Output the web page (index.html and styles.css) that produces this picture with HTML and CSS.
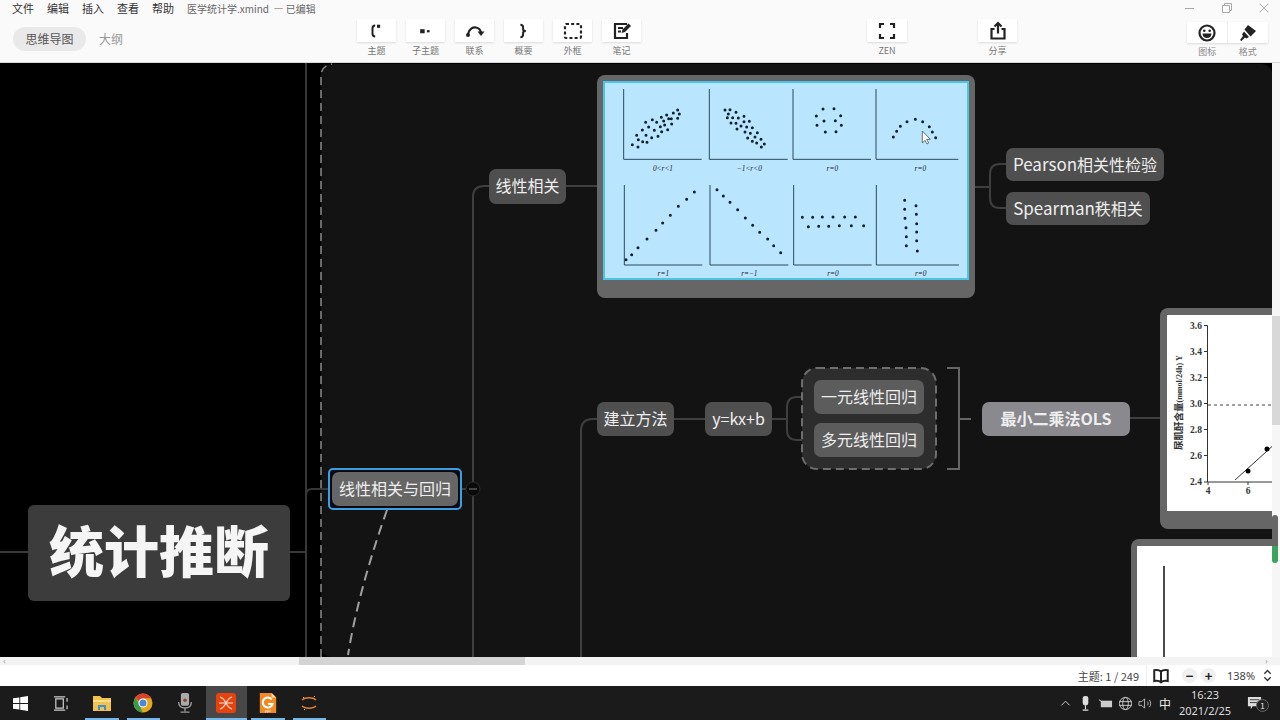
FILE: index.html
```html
<!DOCTYPE html>
<html lang="zh-CN">
<head>
<meta charset="utf-8">
<title>医学统计学.xmind</title>
<link rel="stylesheet" href="styles.css">
</head>
<body>
<div class="app">
  <header class="topbar">
    <div class="leftcol">
      <nav class="menu">
        <span>文件</span><span>编辑</span><span>插入</span><span>查看</span><span>帮助</span>
        <span class="doc">医学统计学.xmind &nbsp;— 已编辑</span>
      </nav>
      <div class="tabs"><span class="tab on">思维导图</span><span class="tab">大纲</span></div>
    </div>
    <div class="tools">
      <div class="tool"><div class="tbox"><svg class="ico" viewBox="0 0 20 20"><path d="M8 4C5.500 4 5 5.500 5 7v6c0 1.500.5 3 3 3" class="st"/><rect x="10" y="3" width="3.500" height="3.500" class="fl"/></svg></div><span>主题</span></div>
      <div class="tool"><div class="tbox"><svg class="ico" viewBox="0 0 20 20"><rect x="3.500" y="8" width="5" height="4.500" class="fl"/><rect x="11" y="9" width="3" height="2.500" class="fl"/></svg></div><span>子主题</span></div>
      <div class="tool"><div class="tbox"><svg class="ico lg" viewBox="0 0 20 20"><path d="M3 13C4 8 8 6 11 6.500s4.500 3 5 5" class="st"/><circle cx="3" cy="14" r="2" class="fl"/><path d="M12.500 10.500h7l-3.500 4.500z" class="fl"/></svg></div><span>联系</span></div>
      <div class="tool"><div class="tbox"><svg class="ico" viewBox="0 0 20 20"><path d="M6 3c3 0 3 1.500 3 3v2c0 1 .5 2 3 2-2.500 0-3 1-3 2v2c0 1.500 0 3-3 3" class="st"/></svg></div><span>概要</span></div>
      <div class="tool"><div class="tbox"><svg class="ico lg" viewBox="0 0 20 20"><rect x="2" y="3" width="16" height="14" rx="1" class="st dash"/></svg></div><span>外框</span></div>
      <div class="tool"><div class="tbox"><svg class="ico lg" viewBox="0 0 20 20"><path d="M15 3H3v14h12v-5M6 7h5M6 10.500h3" class="st"/><path d="M9.500 12l1-3.500L16.500 2.500l2.500 2.500-6 6z" class="fl"/></svg></div><span>笔记</span></div>
    </div>
    <div class="tool zen"><div class="tbox wide"><svg class="ico lg" viewBox="0 0 20 20"><path d="M7 3H3v4M13 3h4v4M7 17H3v-4M13 17h4v-4" class="st"/></svg></div><span>ZEN</span></div>
    <div class="tool share"><div class="tbox"><svg class="ico lg" viewBox="0 0 20 20"><path d="M6.500 8H3.500v9.500h13V8h-3M10 12.500V2.500M6.500 5.500L10 2l3.500 3.500" class="st"/></svg></div><span>分享</span></div>
    <div class="rightcol">
      <div class="winctl">
        <svg class="wc" viewBox="0 0 12 12"><path d="M1 6.500h9"/></svg>
        <svg class="wc" viewBox="0 0 12 12"><path d="M1.500 3.500h7v7h-7zM3.500 3.500v-2h7v7h-2"/></svg>
        <svg class="wc" viewBox="0 0 12 12"><path d="M1.500 1.500l9 9M10.500 1.500l-9 9"/></svg>
      </div>
      <div class="pair">
        <div class="pbox"><svg class="ico lg" viewBox="0 0 20 20"><circle cx="10" cy="10" r="7.500" class="st"/><circle cx="7.300" cy="7.800" r="1.300" class="fl"/><circle cx="12.700" cy="7.800" r="1.300" class="fl"/><path d="M5.500 10.500h9c0 3-2 4.500-4.500 4.500s-4.500-1.500-4.500-4.500z" class="fl"/></svg></div>
        <div class="pbox"><svg class="ico lg" viewBox="0 0 20 20"><path d="M10 2l8 6-5.500 5.500-6-7zM6 8.500l5 5.500-2.500 1.500-1.500-1-3.500 3.500-1.500-1 3-4-1-1.500z" class="fl"/></svg></div>
      </div>
      <div class="plabels"><span>图标</span><span>格式</span></div>
    </div>
  </header>

  <div class="workspace">
    <main class="stage">
      <svg class="wires" viewBox="0 63 1272 594">
        <rect x="321" y="64" width="951" height="593" rx="10" class="region"/>
        <path d="M321 657V76q0-10 11-12" class="edge"/>
        <path d="M306 63V657M0 552H28M290 552H306M306 495q0-6 6-6H330" class="ln dim"/>
        <path d="M473 657V197q0-11 11-11H489M462 489H473" class="ln"/>
        <path d="M581 657V431q0-12 12-12H597M674 419H705" class="ln"/>
        <path d="M566 186H597" class="ln"/>
        <path d="M975 187H990M1006 164H1000q-10 0-10 10V198q0 10 10 10H1006" class="ln"/>
        <path d="M772 419H787M814 397H797q-10 0-10 10V430q0 10 10 10H814" class="ln"/>
        <path d="M947 368H959V469H947M959 419H971" class="ln brk"/>
        <path d="M1130 418H1160" class="ln"/>
        <path d="M387 510C372 552 356 605 348 655" class="curve"/>
        <rect x="802" y="368" width="134" height="101" rx="15" class="boundary"/>
        <circle cx="473" cy="489" r="7" class="fold"/>
        <path d="M469 489h8" class="foldbar"/>
      </svg>

      <div class="node big">统计推断</div>
      <div class="selring"><div class="node inner">线性相关与回归</div></div>
      <div class="node n-corr">线性相关</div>
      <div class="node n-pearson"><span><span class="lat">Pearson</span>相关性检验</span></div>
      <div class="node n-spearman"><span><span class="lat">Spearman</span>秩相关</span></div>
      <div class="node n-build">建立方法</div>
      <div class="node n-eq">y=kx+b</div>
      <div class="node n-uni">一元线性回归</div>
      <div class="node n-multi">多元线性回归</div>
      <div class="node n-ols">最小二乘法OLS</div>

      <div class="card card1">
        <svg class="plot" viewBox="24 33 1098 597">
          <path class="axis" d="M86 57V268H320M343 57V268H578M594 57V268H828M843 57V268H1090M88 345V585H322M345 345V585H580M596 345V585H830M844 345V585H1092"/>
          <path class="dots" d="M112 224h0M129 231h0M130 209h0M125 196h0M143 215h0M156 217h0M153 196h0M170 203h0M189 199h0M142 180h0M161 171h0M178 181h0M152 157h0M172 149h0M185 157h0M196 170h0M200 185h0M218 179h0M230 162h0M209 165h0M199 142h0M206 153h0M215 135h0M221 146h0M235 129h0M248 120h0M253 132h0M248 145h0M229 146h0"/>
          <path class="dots" d="M390 120h0M405 119h0M423 127h0M400 132h0M397 143h0M413 143h0M430 144h0M447 139h0M408 159h0M423 160h0M438 168h0M463 154h0M447 155h0M426 177h0M450 186h0M455 171h0M472 173h0M466 190h0M487 188h0M458 204h0M480 201h0M498 208h0M472 214h0M485 219h0M508 222h0M499 231h0"/>
          <path class="dots" d="M684 117h0M717 116h0M664 138h0M737 137h0M687 153h0M721 152h0M666 166h0M739 166h0M691 186h0M723 185h0"/>
          <path class="dots" d="M895 201h0M905 184h0M916 169h0M936 155h0M961 148h0M983 155h0M1003 170h0M1012 186h0M1022 203h0"/>
          <path class="dots" d="M93 569h0M110 554h0M129 533h0M156 507h0M183 481h0M203 459h0M226 436h0M250 409h0M275 388h0M298 366h0"/>
          <path class="dots" d="M366 359h0M385 378h0M405 397h0M428 419h0M451 444h0M473 466h0M494 487h0M518 507h0M536 527h0M557 548h0"/>
          <path class="dots" d="M622 442h0M653 442h0M682 441h0M714 441h0M749 441h0M781 441h0M640 470h0M671 469h0M701 469h0M733 467h0M769 467h0M806 467h0"/>
          <path class="dots" d="M929 391h0M929 418h0M930 445h0M933 473h0M934 500h0M934 527h0M963 407h0M964 433h0M965 461h0M965 486h0M965 512h0M967 543h0"/>
          <g class="cap">
            <text x="204" y="302">0&lt;r&lt;1</text><text x="463" y="302">−1&lt;r&lt;0</text><text x="712" y="302">r=0</text><text x="976" y="302">r=0</text>
            <text x="205" y="619">r=1</text><text x="463" y="619">r=−1</text><text x="714" y="619">r=0</text><text x="977" y="619">r=0</text>
          </g>
          <path class="cursor" d="M982 183v36l8-8 6 11 5-3-6-11h11z"/>
        </svg>
      </div>

      <div class="card card2">
        <svg class="plot" viewBox="1167 315 105 196">
          <path class="chart" d="M1204 325.500h3.500V482H1272M1204 351.500h3M1204 377.500h3M1204 403.500h3M1204 429.500h3M1204 455.500h3M1204 482h3M1208 482v3M1248 482v3"/>
          <path class="chartdash" d="M1208 405H1272"/>
          <path class="chart" d="M1235 480L1272 446.500"/>
          <circle cx="1248" cy="471" r="2.500"/><circle cx="1267" cy="449" r="2.500"/>
          <g class="tick">
            <text x="1196" y="329">3.6</text><text x="1196" y="355">3.4</text><text x="1196" y="381">3.2</text><text x="1196" y="407">3.0</text><text x="1196" y="433">2.8</text><text x="1196" y="459">2.6</text><text x="1196" y="485">2.4</text>
            <text x="1208" y="494">4</text><text x="1248" y="494">6</text>
          </g>
          <text class="ylab" transform="translate(1182 450) rotate(-90)">尿肌酐含量<tspan class="ylab-s">(mmol/24h) Y</tspan></text>
        </svg>
      </div>

      <div class="card card3">
        <svg class="plot" viewBox="1137 546 135 111"><path class="chart thick" d="M1164 566V657"/></svg>
      </div>
    </main>
    <aside class="vscroll">
      <span class="vthumb"></span>
      <span class="vmark"></span>
    </aside>
  </div>

  <div class="hscroll"><span class="arrow">‹</span><span class="hthumb"></span><span class="arrow end">›</span></div>

  <footer class="status">
    <span class="count">主题: 1 / 249</span>
    <span class="book"><svg class="ico" viewBox="0 0 20 20"><path d="M10 5C8 3 5 3 2.500 3.500v12c2.500-.5 5.500-.5 7.500 1.500 2-2 5-2 7.500-1.500v-12C15 3 12 3 10 5zM10 5v12" class="st"/></svg></span>
    <span class="zbtn">−</span><span class="zbtn">+</span>
    <span class="zoomval">138%</span>
    <svg class="updown" viewBox="0 0 10 16"><path d="M1.500 6L5 2.500 8.500 6M1.500 10L5 13.500 8.500 10"/></svg>
  </footer>

  <div class="taskbar">
    <div class="tsk"><svg class="tic small" viewBox="0 0 16 16"><path d="M0 2.500L6.800 1.500V7.500H0zM7.700 1.400L16 0V7.500H7.700zM0 8.500H6.800V14.500L0 13.500zM7.700 8.500H16V16L7.700 14.600z" fill="#fff"/></svg></div>
    <div class="tsk"><svg class="tic small" viewBox="0 0 16 16"><path d="M3 3h8v10H3zM1 1h12M1 15h12M15 2v4M15 10v4" fill="none" stroke="#ccc" stroke-width="1.300"/></svg></div>
    <div class="apps">
      <div class="tsk tapp run"><svg class="tic" viewBox="0 0 20 20"><path d="M1 3h7l2 2h9v13H1z" fill="#f2c24d"/><path d="M1 7h18v2H1z" fill="#fbe08c"/><path d="M6 12h8v5h-2v-3H8v3H6z" fill="#3d8fcf"/></svg></div>
      <div class="tsk tapp run"><svg class="tic" viewBox="0 0 20 20"><circle cx="10" cy="10" r="9.500" fill="#e3a91c"/><path d="M10 .5a9.500 9.500 0 0 1 8.200 4.700H10A5 5 0 0 0 5.500 8L2.400 4.400A9.500 9.500 0 0 1 10 .5z" fill="#d8402f"/><path d="M2.400 4.400L6.500 12l3 7.500A9.500 9.500 0 0 1 2.400 4.400z" fill="#3a9a4a"/><circle cx="10" cy="10" r="4.500" fill="#fff"/><circle cx="10" cy="10" r="3.500" fill="#4a87e0"/></svg></div>
      <div class="tsk tapp"><svg class="tic" viewBox="0 0 20 22"><rect x="5.500" y="0" width="9" height="14" rx="2" fill="#aaa"/><circle cx="10" cy="8" r="2" fill="#8a4a30"/><path d="M3 10c0 5 3 6.500 7 6.500s7-1.500 7-6.500M10 17v3M5 21h10" fill="none" stroke="#999" stroke-width="1.500"/></svg></div>
      <div class="tsk tapp run act"><svg class="tic" viewBox="0 0 20 20"><rect width="20" height="20" rx="3" fill="#e8430f"/><path d="M4 4c3 1 4.500 3 6 6 1.500-3 3-5 6-6M4 16c3-1 4.500-3 6-6 1.500 3 3 5 6 6M3 10h14" fill="none" stroke="#ffe3d4" stroke-width="1.100"/></svg></div>
      <div class="tsk tapp run"><svg class="tic" viewBox="0 0 20 22"><path d="M1 0h13l5 5v17H1z" fill="#f08a24"/><path d="M14 0l5 5h-5z" fill="#fbd9a8"/><path d="M14 7a5.500 5.500 0 1 0 1 5h-5" fill="none" stroke="#fff" stroke-width="2.200"/><text x="10" y="20.500" class="ofd">ppt</text></svg></div>
      <div class="tsk tapp run"><svg class="tic" viewBox="0 0 20 20"><path d="M3 7c3-3 11-3 14 0M3 13c3 3 11 3 14 0" fill="none" stroke="#e27f2c" stroke-width="1.500"/><path d="M4 4l1 1M16 3l-1 1M5 17l1-1" stroke="#bbb" stroke-width="1"/></svg></div>
    </div>
    <div class="tray">
      <span class="ti"><svg class="tri" viewBox="0 0 12 12"><path d="M1.500 8L6 3.500 10.500 8" fill="none" stroke="#ddd" stroke-width="1"/></svg></span>
      <span class="ti"><svg class="tri lgr" viewBox="0 0 12 16"><rect x="3" y="0" width="6" height="10" rx="2.500" fill="#ddd"/><path d="M6 10v4M3 15h6" stroke="#ddd" stroke-width="1.200"/></svg></span>
      <span class="ti"><svg class="tri lgr" viewBox="0 0 16 12"><rect x="3" y="3" width="12" height="7" fill="#ccc"/><path d="M1 2l3 2" stroke="#ddd"/></svg></span>
      <span class="ti"><svg class="tri lgr" viewBox="0 0 16 16"><circle cx="8" cy="8" r="6.500" fill="none" stroke="#ccc"/><ellipse cx="8" cy="8" rx="3" ry="6.500" fill="none" stroke="#ccc"/><path d="M1.500 6h13M1.500 10h13" stroke="#ccc"/></svg></span>
      <span class="ti"><svg class="tri lgr" viewBox="0 0 16 16"><path d="M1 6h3l3-3v10l-3-3H1z" fill="none" stroke="#bbb"/><path d="M10 6c1 1 1 3 0 4M12 4c2 2 2 6 0 8" fill="none" stroke="#bbb"/></svg></span>
      <span class="ti ime">中</span>
      <span class="clock"><span>16:23</span><span>2021/2/25</span></span>
      <span class="notif"><svg class="tri lgr" viewBox="0 0 16 16"><path d="M1 1h14v10H6l-2 3v-3H1z" fill="#ddd"/><path d="M3 4h10M3 7h10" stroke="#333"/></svg><b class="badge">1</b></span>
    </div>
  </div>
</div>
</body>
</html>
```
FILE: styles.css
```css
* { box-sizing: border-box; }
html, body { margin: 0; height: 100%; overflow: hidden; }
body { font-family: "Noto Sans CJK SC", "Noto Sans", sans-serif; }
.app { width: 1280px; height: 720px; display: flex; flex-direction: column; }

/* top bar */
.topbar { height: 63px; flex: none; display: flex; background: #fafafa; border-bottom: 1px solid #d8d8d8; color: #444; }
.leftcol { width: 357px; flex: none; padding-left: 12px; }
.menu { display: flex; gap: 13px; height: 27px; align-items: center; padding-bottom: 11px; font-size: 11px; color: #333; white-space: nowrap; }
.menu .doc { font-size: 10px; color: #666; }
.tabs { display: flex; align-items: center; gap: 13px; margin-left: 1px; }
.tab { font-size: 12px; color: #999; line-height: 24px; }
.tab.on { width: 73px; height: 24px; border-radius: 12px; background: #e9e9e9; color: #555; text-align: center; }
.tools { display: flex; gap: 10px; flex: none; }
.tool { display: flex; flex-direction: column; align-items: center; padding-top: 19px; width: 39px; flex: none; }
.tool span { font-size: 9px; line-height: 12px; margin-top: 3px; color: #777; white-space: nowrap; }
.tbox { width: 39px; height: 23px; background: #fff; box-shadow: 0 1px 2px rgba(0,0,0,.12); display: flex; align-items: center; justify-content: center; }
.tbox.wide { width: 40px; }
.ico { width: 18px; height: 18px; }
.ico.lg { width: 20px; height: 20px; }
.st { fill: none; stroke: #222; stroke-width: 2.200; }
.fl { fill: #222; }
.dash { stroke-dasharray: 3 2.200; }
.zen { width: 40px; margin-left: 226px; }
.share { margin-left: 71px; }
.rightcol { width: 93px; margin-left: 170px; flex: none; }
.winctl { display: flex; height: 22px; gap: 25px; align-items: flex-start; margin-left: -3px; }
.wc { width: 12px; height: 12px; margin-top: 2px; fill: none; stroke: #aaa; stroke-width: 1; }
.pair { width: 81px; height: 21px; display: flex; background: #fff; box-shadow: 0 1px 2px rgba(0,0,0,.12); }
.pbox { flex: 1; display: flex; align-items: center; justify-content: center; }
.pbox + .pbox { border-left: 1px solid #eee; }
.plabels { width: 81px; display: flex; font-size: 9px; line-height: 12px; margin-top: 3px; color: #888; }
.plabels span { flex: 1; text-align: center; }

/* canvas */
.workspace { flex: 1; min-height: 0; display: flex; }
.stage { position: relative; width: 1272px; flex: none; background: #000; overflow: hidden; }
.wires { position: absolute; left: 0; top: 0; width: 1272px; height: 594px; }
.region { fill: #131313; }
.edge { fill: none; stroke: #8a8a8a; stroke-width: 1.500; stroke-dasharray: 8 5; }
.ln { fill: none; stroke: #3f3f3f; stroke-width: 2; }
.ln.dim { stroke: #383838; }
.ln.brk { stroke: #666; }
.curve { fill: none; stroke: #a0a0a0; stroke-width: 2; stroke-dasharray: 10 6; }
.boundary { fill: #2d2d2d; stroke: #6e6e6e; stroke-width: 2; stroke-dasharray: 8 5; }
.fold { fill: #0a0a0a; stroke: #2a2a2a; stroke-width: 1; }
.foldbar { stroke: #444; stroke-width: 2; }

.node { position: absolute; display: flex; align-items: center; justify-content: center; border-radius: 7px; background: #4f4f4f; color: #eee; font-size: 16px; white-space: nowrap; padding-bottom: 2px; }
.lat { font-size: 17px; }
.big { left: 28px; top: 442px; width: 262px; height: 96px; background: #3c3c3c; color: #f5f5f5; font-size: 55px; font-weight: 900; border-radius: 6px; padding-bottom: 10px; }
.selring { position: absolute; left: 328px; top: 405px; width: 134px; height: 42px; border: 2px solid #3d9fe0; border-radius: 5px; background: #050a14; padding: 2px; }
.node.inner { position: static; width: 100%; height: 100%; background: #666; font-size: 16px; }
.n-corr { left: 489px; top: 106px; width: 77px; height: 35px; padding-bottom: 3px; }
.n-pearson { left: 1006px; top: 85px; width: 158px; height: 33px; }
.n-spearman { left: 1006px; top: 129px; width: 144px; height: 33px; }
.n-build { left: 597px; top: 339px; width: 77px; height: 34px; }
.n-eq { left: 705px; top: 339px; width: 67px; height: 34px; }
.n-uni { left: 814px; top: 317px; width: 110px; height: 34px; background: #5c5c5c; }
.n-multi { left: 814px; top: 360px; width: 110px; height: 34px; background: #5c5c5c; }
.n-ols { left: 982px; top: 339px; width: 148px; height: 34px; background: #89898e; font-weight: 700; }

.card { position: absolute; background: #666; border-radius: 8px; padding: 7px 0 0 7px; }
.card1 { left: 597px; top: 12px; width: 378px; height: 223px; padding: 6px; }
.card1 .plot { display: block; width: 366px; height: 199px; background: #b9e5ff; outline: 2px solid #4cc4e8; outline-offset: -2px; }
.card2 { left: 1160px; top: 245px; width: 130px; height: 221px; }
.card2 .plot { display: block; width: 105px; height: 196px; background: #fff; }
.card3 { left: 1131px; top: 476px; width: 160px; height: 150px; padding: 7px 0 0 6px; }
.card3 .plot { display: block; width: 135px; height: 111px; background: #fff; }
.axis { fill: none; stroke: #2d4a5c; stroke-width: 3; }
.dots { fill: none; stroke: #10202c; stroke-width: 9; stroke-linecap: round; }
.cap text { font-family: "Liberation Serif", serif; font-size: 22px; text-anchor: middle; fill: #223; font-style: italic; }
.cursor { fill: #fff; stroke: #333; stroke-width: 2; }
.chart { fill: none; stroke: #333; stroke-width: 1; }
.chart.thick { stroke: #111; stroke-width: 1.500; }
.chartdash { fill: none; stroke: #444; stroke-width: 1; stroke-dasharray: 3 3; }
.tick text { font-family: "Liberation Serif", serif; font-size: 9.500px; font-weight: 700; text-anchor: middle; fill: #333; }
.ylab { font-family: "Noto Sans CJK SC", sans-serif; font-size: 9.500px; font-weight: 700; fill: #333; }
.ylab-s { font-family: "Liberation Serif", serif; font-size: 8px; }

.vscroll { position: relative; width: 8px; flex: none; background: #f6f6f6; }
.vthumb { position: absolute; left: 0; top: 253px; width: 8px; height: 109px; background: #d8d8d8; }
.vmark { position: absolute; left: 0; top: 452px; width: 6px; height: 48px; border-radius: 3px; background: linear-gradient(#666 0 64%, #3aa35c 64% 100%); }

.hscroll { position: relative; height: 8px; flex: none; background: #f3f3f3; display: flex; }
.hthumb { position: absolute; left: 299px; top: 0; width: 226px; height: 8px; background: #d4d4d4; }
.arrow { position: absolute; left: 3px; top: 0; font-size: 9px; line-height: 7px; color: #aaa; font-family: "Noto Sans", sans-serif; }
.arrow.end { left: 1265px; }

/* status */
.status { height: 21px; flex: none; display: flex; align-items: center; background: #fff; font-size: 11px; color: #444; padding-right: 8px; justify-content: flex-end; }
.count { margin-right: 7px; }
.book { width: 36px; height: 21px; border-left: 1px solid #eee; padding-left: 5px; display: flex; align-items: center; }
.zbtn { width: 15px; height: 15px; border-radius: 50%; background: #f0f0f0; display: flex; align-items: center; justify-content: center; font-size: 13px; font-weight: 700; color: #222; margin-right: 4px; }
.zoomval { margin-left: 7px; width: 27px; margin-right: 9px; white-space: nowrap; font-family: "Noto Sans", sans-serif; }
.updown { width: 9px; height: 15px; fill: none; stroke: #333; stroke-width: 1.500; }

/* taskbar */
.taskbar { height: 34px; flex: none; display: flex; background: #1b1b1b; color: #ddd; }
.tsk { width: 40px; height: 34px; position: relative; display: flex; align-items: center; justify-content: center; flex: none; }
.apps { display: flex; margin-left: 1px; }
.tapp { width: 41.500px; }
.tapp.run::after { content: ""; position: absolute; left: 4px; right: 4px; bottom: 0; height: 2px; background: #78b8e8; }
.tapp.act { background: #484848; }
.tapp.act::after { left: 0; right: 0; }
.tic { width: 20px; height: 20px; }
.tic.small { width: 15px; height: 15px; }
.ofd { font-size: 4px; fill: #fff; text-anchor: middle; font-family: "Noto Sans", sans-serif; }
.tray { margin-left: auto; display: flex; align-items: center; padding-right: 7px; }
.ti { width: 20px; display: flex; align-items: center; justify-content: center; }
.tri { width: 11px; height: 11px; }
.tri.lgr { width: 15px; height: 15px; }
.ime { font-size: 12px; color: #eee; }
.clock { width: 60px; display: flex; flex-direction: column; align-items: center; font-size: 11px; line-height: 16px; font-family: "Noto Sans", sans-serif; color: #ddd; }
.notif { position: relative; width: 38px; display: flex; justify-content: center; }
.badge { position: absolute; left: 21px; top: 3px; width: 13px; height: 13px; border-radius: 50%; background: #222; border: 1px solid #666; font-size: 8px; line-height: 11px; text-align: center; color: #eee; font-weight: 400; }
```
